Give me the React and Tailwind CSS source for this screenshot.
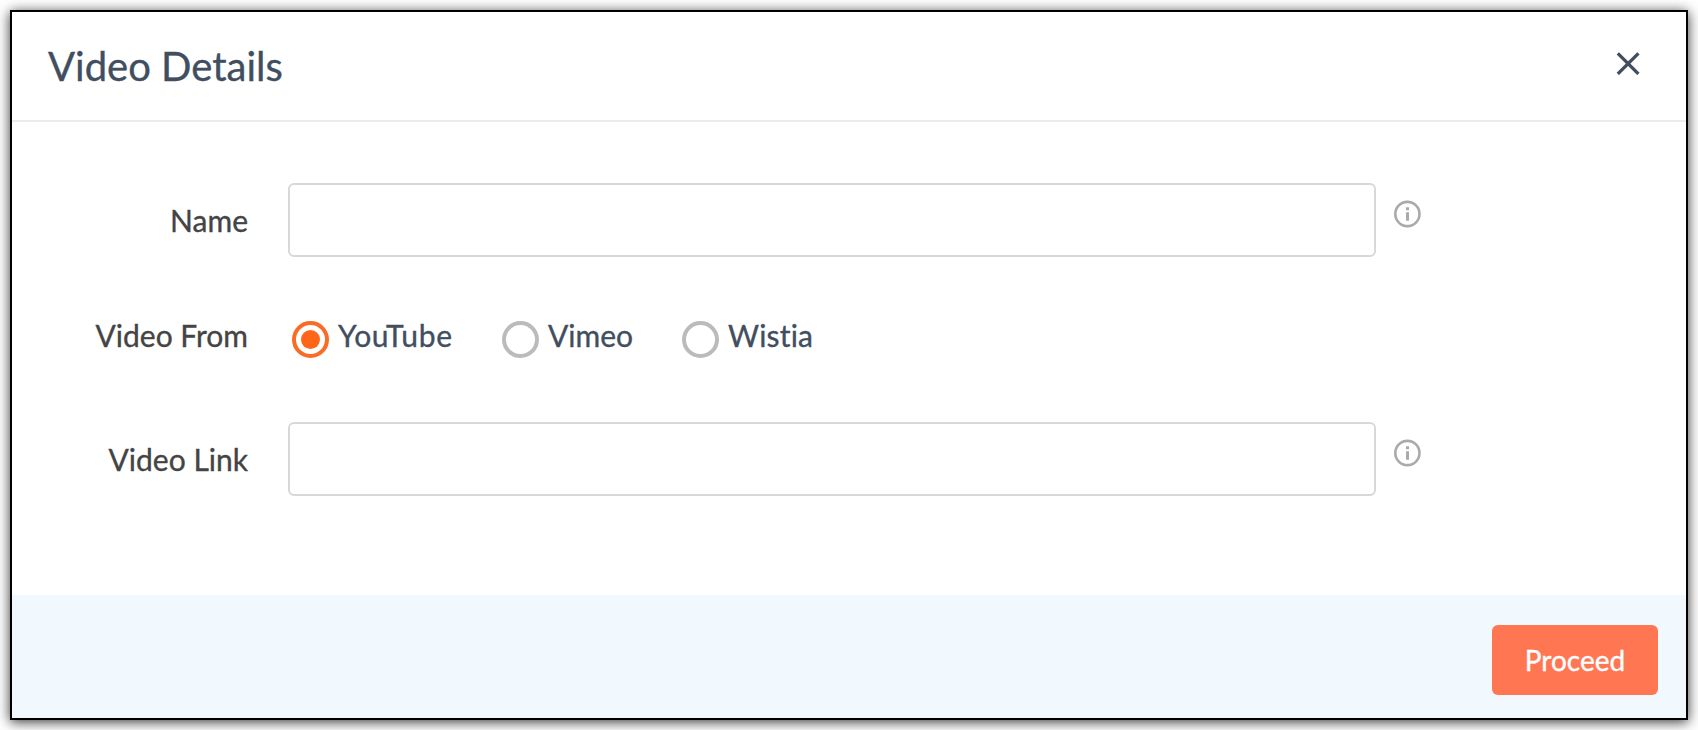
import React, { useState } from "react";

const sources = [
  { name: "YouTube", width: "w-[210px]", tracking: "tracking-[0.7px]" },
  { name: "Vimeo", width: "w-[180px]", tracking: "tracking-normal" },
  { name: "Wistia", width: "w-[180px]", tracking: "tracking-[0.2px]" },
];

const InfoIcon = () => (
  <svg className="w-7 h-7 ml-[17px] mt-[17px] shrink-0" viewBox="0 0 28 28" fill="none">
    <circle cx="14.4" cy="14" r="12.1" stroke="#aaaaaa" strokeWidth="2.6" />
    <path d="M14.5 7.2v3M14.5 12.3v8.4" stroke="#aaaaaa" strokeWidth="3" />
  </svg>
);

const TextRow = ({ id, label, value, onChange }) => (
  <div className="flex h-[74px]">
    <label
      htmlFor={id}
      className="w-[236px] mr-10 text-right text-[30px] leading-[74px] text-[#444444]"
    >
      {label}
    </label>
    <input
      id={id}
      type="text"
      value={value}
      onChange={onChange}
      className="w-[1088px] h-[74px] px-4 text-[30px] bg-white border-2 border-[#d8d8d8] rounded-md outline-none"
    />
    <InfoIcon />
  </div>
);

const VideoDetails = () => {
  const [name, setName] = useState("");
  const [link, setLink] = useState("");
  const [source, setSource] = useState("YouTube");

  return (
    <div className="h-screen p-[10px] bg-white overflow-hidden font-['Lato',sans-serif] [font-variant-ligatures:none] [-webkit-text-stroke:0.35px]">
      <div className="flex flex-col w-[1678px] h-[710px] bg-white border-2 border-black shadow-[0_2px_12px_rgba(0,0,0,0.8)]">
        {/* Header */}
        <div className="flex items-start justify-between h-[110px] shrink-0 pl-9 pr-[46px] border-b-2 border-[#ececec]">
          <h1 className="pt-[29px] text-[40px] leading-[50px] text-[#414e60]">Video Details</h1>
          <button type="button" aria-label="Close" className="mt-[39px]">
            <svg className="w-6 h-6" viewBox="0 0 24 24" fill="none">
              <path d="M1.8 2.3l20.6 20.6M22.4 2.3L1.8 22.9" stroke="#414e60" strokeWidth="3.3" />
            </svg>
          </button>
        </div>

        {/* Form */}
        <div className="flex-1 pt-[61px]">
          <TextRow id="name" label="Name" value={name} onChange={(e) => setName(e.target.value)} />

          <div className="flex mt-14 h-11">
            <span className="w-[236px] mr-[43.5px] text-right text-[30px] leading-[44px] text-[#444444]">
              Video From
            </span>
            {sources.map((item) => (
              <label key={item.name} className={`flex ${item.width} ${item.tracking} text-[30px] leading-[44px] text-[#414e60]`}>
                <input
                  type="radio"
                  name="source"
                  checked={source === item.name}
                  onChange={() => setSource(item.name)}
                  className="sr-only"
                />
                <span
                  className={`flex items-center justify-center w-[37px] h-[37px] mt-2 mr-[9.5px] shrink-0 rounded-full border-4 ${
                    source === item.name ? "border-[#fa6c26]" : "border-[#bbbbbb]"
                  }`}
                >
                  {source === item.name && <span className="w-[19px] h-[19px] rounded-full bg-[#ff6617]" />}
                </span>
                {item.name}
              </label>
            ))}
          </div>

          <div className="mt-[65px]">
            <TextRow id="link" label="Video Link" value={link} onChange={(e) => setLink(e.target.value)} />
          </div>
        </div>

        {/* Footer */}
        <div className="flex items-start justify-end h-[123px] shrink-0 pt-[30px] pr-7 bg-[#f1f9fe]">
          <button type="button" className="w-[166px] h-[70px] rounded-md bg-[#ff7653] text-[28px] text-white">
            Proceed
          </button>
        </div>
      </div>
    </div>
  );
};

export default VideoDetails;
